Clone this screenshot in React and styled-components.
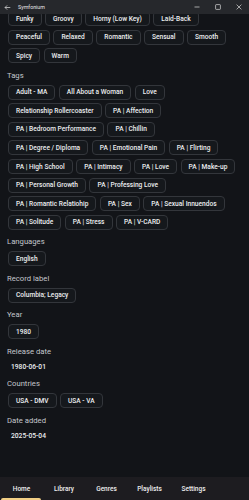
import { useLayoutEffect, useRef } from "react";
import styled, { createGlobalStyle } from "styled-components";

const GlobalStyle = createGlobalStyle`
  html, body {
    margin: 0;
    padding: 0;
    background: #121418;
  }
  * {
    box-sizing: border-box;
  }
`;

const Window = styled.div`
  width: 100vw;
  height: 100vh;
  display: flex;
  flex-direction: column;
  background: #121418;
  font-family: Roboto, "Noto Sans", sans-serif;
  color: #e9eaec;
  overflow: hidden;
`;

const TitleBar = styled.div`
  height: 14px;
  flex: none;
  display: flex;
  align-items: center;
  background: #26282c;
  padding-left: 4px;
  position: relative;
  z-index: 1;
`;

const TitleText = styled.span`
  font-size: 5.3px;
  color: #e6e6e6;
  margin-left: 7px;
  flex: 1;
`;

const WinButton = styled.div`
  width: 21px;
  height: 14px;
  display: flex;
  align-items: center;
  justify-content: center;
`;

const Scroller = styled.div`
  flex: 1;
  min-height: 0;
  overflow-y: auto;
  scrollbar-width: none;

  &::-webkit-scrollbar {
    display: none;
  }
`;

const ScrollBody = styled.div`
  padding: 6px 13px 80px 7px;
  display: flex;
  flex-direction: column;
  gap: 7.5px;
`;

const Section = styled.section`
  display: flex;
  flex-direction: column;
`;

const Label = styled.div`
  font-size: 7.7px;
  line-height: 10px;
  color: #c4c7cc;
  margin-bottom: ${(p) => (p.$value ? "1px" : "4px")};
`;

const ChipList = styled.div`
  display: flex;
  flex-wrap: wrap;
  gap: 3.6px 3.5px;
  padding-left: 1px;
`;

const Chip = styled.span`
  display: inline-flex;
  align-items: center;
  height: 15px;
  padding: 0 7px;
  border: 1px solid #33363b;
  border-radius: 4px;
  background: #15181c;
  font-size: 6.6px;
  font-weight: 500;
  color: #eceef0;
  white-space: nowrap;
`;

const Value = styled.div`
  font-size: 6.7px;
  font-weight: 500;
  line-height: 10px;
  padding: 4px 4px 0;
  color: #eceef0;
`;

const BottomNav = styled.nav`
  height: 23px;
  flex: none;
  display: flex;
  background: #1d1c20;
`;

const Tab = styled.div`
  position: relative;
  width: ${(p) => p.$width}px;
  flex: none;
  display: flex;
  align-items: center;
  justify-content: center;
  font-size: 6.5px;
  font-weight: 500;
  color: #eeeeee;

  &::after {
    content: "";
    display: ${(p) => (p.$active ? "block" : "none")};
    position: absolute;
    left: 1px;
    right: 2px;
    bottom: 0;
    height: 2px;
    border-radius: 2px 2px 0 0;
    background: #f2cf85;
  }
`;

const moods = [
  "Funky", "Groovy", "Horny (Low Key)", "Laid-Back",
  "Peaceful", "Relaxed", "Romantic", "Sensual", "Smooth",
  "Spicy", "Warm",
];

const tags = [
  "Adult - MA", "All About a Woman", "Love",
  "Relationship Rollercoaster", "PA | Affection",
  "PA | Bedroom Performance", "PA | Chillin",
  "PA | Degree / Diploma", "PA | Emotional Pain", "PA | Flirting",
  "PA | High School", "PA | Intimacy", "PA | Love", "PA | Make-up",
  "PA | Personal Growth", "PA | Professing Love",
  "PA | Romantic Relatiohip", "PA | Sex", "PA | Sexual Innuendos",
  "PA | Solitude", "PA | Stress", "PA | V-CARD",
];

// the list is scrolled a little, the "Moods" heading sits above the view
const sections = [
  { key: "moods", chips: moods },
  { key: "tags", label: "Tags", chips: tags },
  { key: "lang", label: "Languages", chips: ["English"] },
  { key: "label", label: "Record label", chips: ["Columbia; Legacy"] },
  { key: "year", label: "Year", chips: ["1980"] },
  { key: "release", label: "Release date", value: "1980-06-01" },
  { key: "countries", label: "Countries", chips: ["USA - DMV", "USA - VA"] },
  { key: "added", label: "Date added", value: "2025-05-04" },
];

const tabs = [
  { name: "Home", width: 43 },
  { name: "Library", width: 42 },
  { name: "Genres", width: 43 },
  { name: "Playlists", width: 43 },
  { name: "Settings", width: 45 },
];

function App() {
  const scrollRef = useRef(null);

  useLayoutEffect(() => {
    if (scrollRef.current) scrollRef.current.scrollTop = 9;
  }, []);

  return (
    <>
      <GlobalStyle />
      <Window>
        <TitleBar>
          <svg width="7" height="7" viewBox="0 0 10 10" fill="none" stroke="#e6e6e6" strokeWidth="1">
            <path d="M9 5H1.5M4.5 2 1.5 5l3 3" />
          </svg>
          <TitleText>Symfonium</TitleText>
          <WinButton>
            <svg width="6" height="6" viewBox="0 0 6 6" stroke="#dcdcdc" strokeWidth="0.7">
              <path d="M0.5 3h5" />
            </svg>
          </WinButton>
          <WinButton>
            <svg width="6" height="6" viewBox="0 0 6 6" fill="none" stroke="#dcdcdc" strokeWidth="0.7">
              <rect x="0.6" y="0.6" width="4.8" height="4.8" rx="0.6" />
            </svg>
          </WinButton>
          <WinButton>
            <svg width="6" height="6" viewBox="0 0 6 6" stroke="#dcdcdc" strokeWidth="0.7">
              <path d="M0.6 0.6l4.8 4.8M5.4 0.6l-4.8 4.8" />
            </svg>
          </WinButton>
        </TitleBar>

        <Scroller ref={scrollRef}>
          <ScrollBody>
            {sections.map((s) => (
              <Section key={s.key}>
                {s.label && <Label $value={!!s.value}>{s.label}</Label>}
                {s.chips ? (
                  <ChipList>
                    {s.chips.map((c) => (
                      <Chip key={c}>{c}</Chip>
                    ))}
                  </ChipList>
                ) : (
                  <Value>{s.value}</Value>
                )}
              </Section>
            ))}
          </ScrollBody>
        </Scroller>

        <BottomNav>
          {tabs.map((t, i) => (
            <Tab key={t.name} $width={t.width} $active={i === 0}>
              {t.name}
            </Tab>
          ))}
        </BottomNav>
      </Window>
    </>
  );
}

export default App;
